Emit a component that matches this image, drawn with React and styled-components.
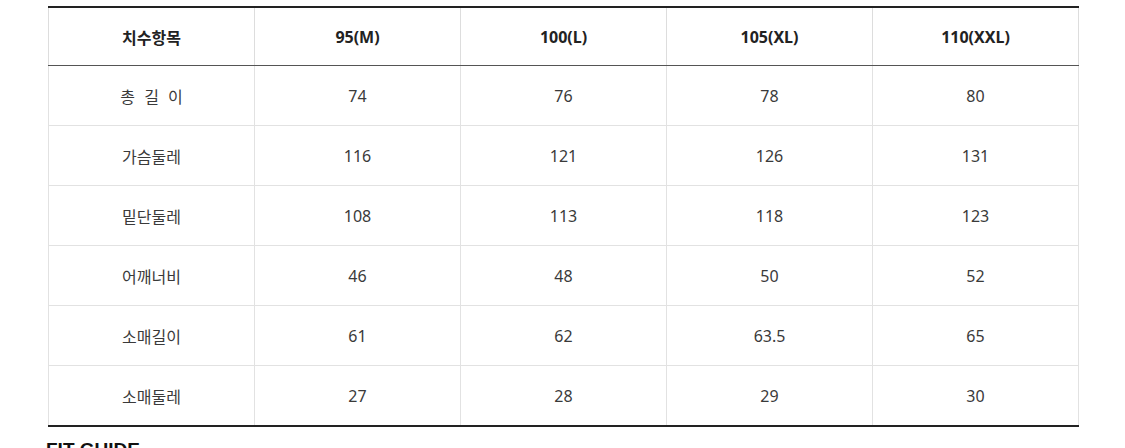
import React from "react";
import styled, { createGlobalStyle } from "styled-components";

const GlobalStyle = createGlobalStyle`
  html, body {
    margin: 0;
    padding: 0;
    background: #fff;
  }
  body {
    font-family: "Noto Sans", "Noto Sans CJK KR", sans-serif;
    overflow: hidden;
  }
`;

const Page = styled.div`
  padding: 6px 0 0 48px;
  width: 1031px;
`;

const SizeTable = styled.table`
  width: 1031px;
  border-collapse: collapse;
  table-layout: fixed;
  border-top: 2px solid #222;
  border-bottom: 2px solid #222;
`;

const HeadCell = styled.th`
  height: 57px;
  padding: 0;
  font-size: 16px;
  font-weight: 700;
  color: #222;
  text-align: center;
  border-left: 1px solid #ddd;
  border-right: 1px solid #ddd;
  border-bottom: 1px solid #555;
`;

const Cell = styled.td`
  height: 59px;
  padding: 0 0 0 ${(p) => (p.$spaced ? "2.5px" : "0")};
  font-size: 16px;
  color: #3a3a3a;
  text-align: center;
  border: 1px solid #e2e2e2;
  letter-spacing: ${(p) => (p.$spaced ? "2.5px" : "0")};
`;

const GuideTitle = styled.h2`
  margin: 12px 0 0 -2px;
  font-family: "Liberation Sans", Arial, sans-serif;
  font-size: 19px;
  font-weight: 700;
  color: #111;
`;

const sizes = ["95(M)", "100(L)", "105(XL)", "110(XXL)"];

const rows = [
  { label: "총 길 이", values: ["74", "76", "78", "80"], spaced: true },
  { label: "가슴둘레", values: ["116", "121", "126", "131"] },
  { label: "밑단둘레", values: ["108", "113", "118", "123"] },
  { label: "어깨너비", values: ["46", "48", "50", "52"] },
  { label: "소매길이", values: ["61", "62", "63.5", "65"] },
  { label: "소매둘레", values: ["27", "28", "29", "30"] },
];

export default function App() {
  return (
    <>
      <GlobalStyle />
      <Page>
        <SizeTable>
          <thead>
            <tr>
              <HeadCell>치수항목</HeadCell>
              {sizes.map((s) => (
                <HeadCell key={s}>{s}</HeadCell>
              ))}
            </tr>
          </thead>
          <tbody>
            {rows.map((r) => (
              <tr key={r.label}>
                <Cell $spaced={r.spaced}>{r.label}</Cell>
                {r.values.map((v, i) => (
                  <Cell key={i}>{v}</Cell>
                ))}
              </tr>
            ))}
          </tbody>
        </SizeTable>
        <GuideTitle>FIT GUIDE</GuideTitle>
      </Page>
    </>
  );
}
